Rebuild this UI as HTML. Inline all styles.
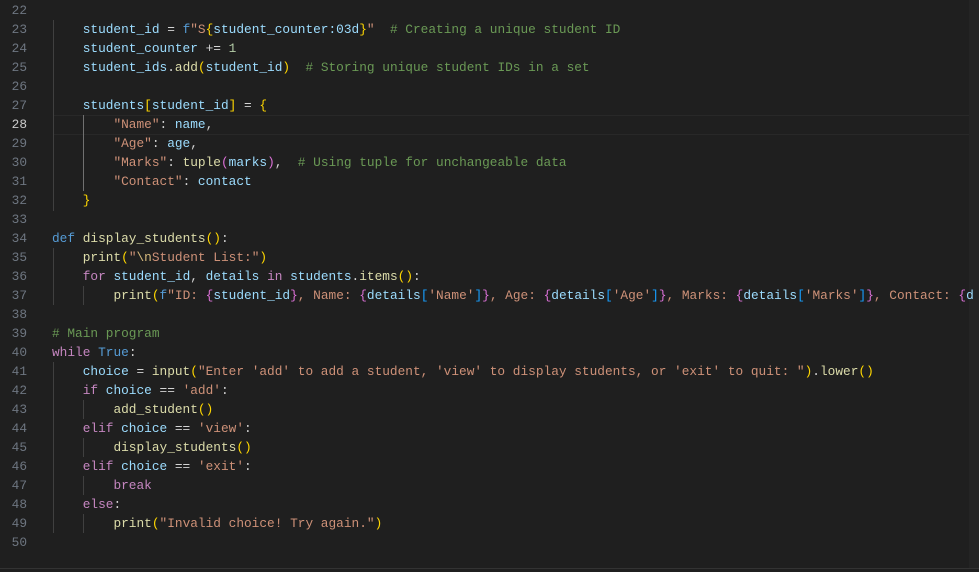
<!DOCTYPE html>
<html><head><style>
body{margin:0;background:#1f1f1f;width:979px;height:572px;overflow:hidden;position:relative;font-family:"Liberation Mono",monospace;font-size:12.8px}
.ln{position:absolute;left:0;width:27px;text-align:right;color:#6e7681;line-height:19px}
.code{position:absolute;left:52px;line-height:19px;white-space:pre;color:#d4d4d4}
.row{height:19px}
.v{color:#9cdcfe}.f{color:#dcdcaa}.s{color:#ce9178}.k{color:#c586c0}.b{color:#569cd6}.c{color:#6a9955}.n{color:#b5cea8}.g{color:#ffd700}.p{color:#da70d6}.bl{color:#179fff}
.guide{position:absolute;width:1px;background:#404040}
</style></head><body>
<div style="position:absolute;left:53px;top:115px;width:923px;height:18px;border-top:1px solid #282828;border-bottom:1px solid #282828"></div>
<div class="guide" style="left:53px;top:20px;height:191px"></div>
<div class="guide" style="left:83px;top:115px;height:76px;background:#707070"></div>
<div class="guide" style="left:53px;top:248px;height:57px"></div>
<div class="guide" style="left:83px;top:286px;height:19px"></div>
<div class="guide" style="left:53px;top:362px;height:171px"></div>
<div class="guide" style="left:83px;top:400px;height:19px"></div>
<div class="guide" style="left:83px;top:438px;height:19px"></div>
<div class="guide" style="left:83px;top:476px;height:19px"></div>
<div class="guide" style="left:83px;top:514px;height:19px"></div>
<div style="position:absolute;right:0;top:0;width:10px;height:568px;background:#242424"></div>
<div style="position:absolute;left:0;top:568px;width:979px;height:1px;background:#333"></div>
<div class="ln" style="top:1px">22<br>23<br>24<br>25<br>26<br>27<br><span style="color:#ccc">28</span><br>29<br>30<br>31<br>32<br>33<br>34<br>35<br>36<br>37<br>38<br>39<br>40<br>41<br>42<br>43<br>44<br>45<br>46<br>47<br>48<br>49<br>50</div>
<div class="code" style="top:1px"><div class="row"> </div><div class="row">    <span class="v">student_id</span> = <span class="b">f</span><span class="s">"S</span><span class="g">{</span><span class="v">student_counter</span><span class="v">:03d</span><span class="g">}</span><span class="s">"</span>  <span class="c"># Creating a unique student ID</span></div><div class="row">    <span class="v">student_counter</span> += <span class="n">1</span></div><div class="row">    <span class="v">student_ids</span>.<span class="f">add</span><span class="g">(</span><span class="v">student_id</span><span class="g">)</span>  <span class="c"># Storing unique student IDs in a set</span></div><div class="row"> </div><div class="row">    <span class="v">students</span><span class="g">[</span><span class="v">student_id</span><span class="g">]</span> = <span class="g">{</span></div><div class="row">        <span class="s">"Name"</span>: <span class="v">name</span>,</div><div class="row">        <span class="s">"Age"</span>: <span class="v">age</span>,</div><div class="row">        <span class="s">"Marks"</span>: <span class="f">tuple</span><span class="p">(</span><span class="v">marks</span><span class="p">)</span>,  <span class="c"># Using tuple for unchangeable data</span></div><div class="row">        <span class="s">"Contact"</span>: <span class="v">contact</span></div><div class="row">    <span class="g">}</span></div><div class="row"> </div><div class="row"><span class="b">def</span> <span class="f">display_students</span><span class="g">()</span>:</div><div class="row">    <span class="f">print</span><span class="g">(</span><span class="s">"</span><span class="s" style="color:#d7ba7d">\n</span><span class="s">Student List:"</span><span class="g">)</span></div><div class="row">    <span class="k">for</span> <span class="v">student_id</span>, <span class="v">details</span> <span class="k">in</span> <span class="v">students</span>.<span class="f">items</span><span class="g">()</span>:</div><div class="row">        <span class="f">print</span><span class="g">(</span><span class="b">f</span><span class="s">"ID: </span><span class="p">{</span><span class="v">student_id</span><span class="p">}</span><span class="s">, Name: </span><span class="p">{</span><span class="v">details</span><span class="bl">[</span><span class="s">'Name'</span><span class="bl">]</span><span class="p">}</span><span class="s">, Age: </span><span class="p">{</span><span class="v">details</span><span class="bl">[</span><span class="s">'Age'</span><span class="bl">]</span><span class="p">}</span><span class="s">, Marks: </span><span class="p">{</span><span class="v">details</span><span class="bl">[</span><span class="s">'Marks'</span><span class="bl">]</span><span class="p">}</span><span class="s">, Contact: </span><span class="p">{</span><span class="v">d</span></div><div class="row"> </div><div class="row"><span class="c"># Main program</span></div><div class="row"><span class="k">while</span> <span class="b">True</span>:</div><div class="row">    <span class="v">choice</span> = <span class="f">input</span><span class="g">(</span><span class="s">"Enter 'add' to add a student, 'view' to display students, or 'exit' to quit: "</span><span class="g">)</span>.<span class="f">lower</span><span class="g">()</span></div><div class="row">    <span class="k">if</span> <span class="v">choice</span> == <span class="s">'add'</span>:</div><div class="row">        <span class="f">add_student</span><span class="g">()</span></div><div class="row">    <span class="k">elif</span> <span class="v">choice</span> == <span class="s">'view'</span>:</div><div class="row">        <span class="f">display_students</span><span class="g">()</span></div><div class="row">    <span class="k">elif</span> <span class="v">choice</span> == <span class="s">'exit'</span>:</div><div class="row">        <span class="k">break</span></div><div class="row">    <span class="k">else</span>:</div><div class="row">        <span class="f">print</span><span class="g">(</span><span class="s">"Invalid choice! Try again."</span><span class="g">)</span></div><div class="row"> </div></div>
</body></html>
